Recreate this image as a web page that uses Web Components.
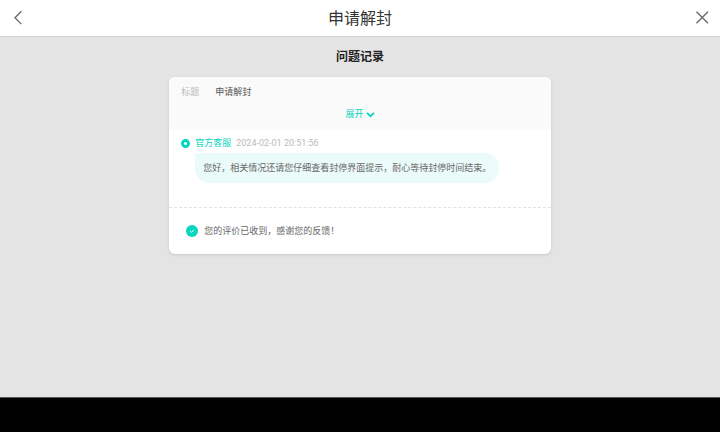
<!DOCTYPE html>
<html lang="zh-CN">
<head>
<meta charset="utf-8">
<meta name="viewport" content="width=device-width, initial-scale=1">
<title>申请解封</title>
<style>
    body {
        margin: 0;
        background: #e4e4e4;
        color: #666;
        font: 9px/16px "Noto Sans CJK SC", sans-serif;
        --accent: #06d6be;
    }
</style>
</head>
<body>

<template id="app-shell-template">
    <style>
        :host {
            display: flex;
            flex-direction: column;
            min-height: 100vh;
        }

        main {
            flex: 1;
            display: flex;
            flex-direction: column;
            align-items: center;
            padding: 8px 16px;
        }

        footer {
            height: 34px;
            background: #000;
            border-top: 1px solid #555;
        }
    </style>

    <slot name="bar"></slot>
    <main><slot></slot></main>
    <footer></footer>
</template>

<template id="title-bar-template">
    <style>
        :host {
            display: block;
        }

        header {
            display: flex;
            align-items: center;
            justify-content: space-between;
            height: 36px;
            padding: 0 8px;
            background: #fff;
            border-bottom: 1px solid #d2d2d2;
        }

        h1 {
            margin: 0;
            padding-bottom: 2px;
            color: #333;
            font-size: 16px;
            line-height: 24px;
            font-weight: 400;
        }

        button {
            display: flex;
            align-items: center;
            justify-content: center;
            width: 20px;
            height: 20px;
            padding: 0;
            border: 0;
            background: none;
            color: #666;
        }

        svg {
            fill: none;
            stroke: currentColor;
            stroke-width: 1.3;
        }
    </style>

    <header>
        <button type="button" aria-label="返回">
            <svg width="20" height="20" viewBox="0 0 20 20"><path d="M13.3 3.3 7 9.7l6.3 6.4"/></svg>
        </button>
        <h1><slot></slot></h1>
        <button type="button" aria-label="关闭">
            <svg width="20" height="20" viewBox="0 0 20 20"><path d="M4.5 3.8 16 15.3M16 3.8 4.5 15.3"/></svg>
        </button>
    </header>
</template>

<template id="record-card-template">
    <style>
        :host {
            display: block;
            width: 53vw;
            min-width: 340px;
            margin-top: 12px;
            border-radius: 6px;
            background: #fff;
            box-shadow: 0 1px 3px rgba(0, 0, 0, .12);
            overflow: hidden;
        }

        .replies {
            padding: 5px 12px 24px;
            border-bottom: 1px dashed #e2e2e2;
        }

        .result {
            padding: 15px 16px;
        }
    </style>

    <slot name="summary"></slot>
    <div class="replies"><slot></slot></div>
    <div class="result"><slot name="result"></slot></div>
</template>

<template id="record-summary-template">
    <style>
        :host {
            display: block;
            padding: 7px 12px 8px;
            background: #fafafa;
        }

        dl {
            display: flex;
            gap: 16px;
            margin: 0;
        }

        dt {
            color: #bbb;
        }

        dd {
            margin: 0;
            color: #555;
        }

        button {
            display: flex;
            align-items: center;
            gap: 2px;
            margin: 6px auto 0;
            padding: 0;
            border: 0;
            background: none;
            color: var(--accent);
            font: inherit;
        }

        svg {
            fill: none;
            stroke: currentColor;
            stroke-width: 1.8;
        }
    </style>

    <dl>
        <dt>标题</dt>
        <dd><slot></slot></dd>
    </dl>
    <button type="button" aria-expanded="false">
        展开
        <svg width="9" height="9" viewBox="0 0 9 9"><path d="m1 2.8 3.5 3.4L8 2.8"/></svg>
    </button>
</template>

<template id="service-reply-template">
    <style>
        :host {
            display: block;
        }

        .meta {
            display: flex;
            align-items: center;
            gap: 5px;
            color: var(--accent);
        }

        time {
            color: #bbb;
            font-family: Roboto, sans-serif;
        }

        .dot {
            box-sizing: border-box;
            width: 9px;
            height: 9px;
            border: 3px solid var(--accent);
            border-radius: 50%;
        }

        p {
            width: fit-content;
            box-sizing: border-box;
            margin: 2px 0 0 14px;
            padding: 7px 8px;
            border-radius: 2px 14px 14px 14px;
            background: #ebfbfa;
        }
    </style>

    <div class="meta">
        <span class="dot"></span>
        <slot name="author"></slot>
        <time></time>
    </div>
    <p><slot></slot></p>
</template>

<template id="result-note-template">
    <style>
        :host {
            display: flex;
            align-items: center;
            gap: 6px;
            padding: 0 1px;
        }

        circle {
            fill: var(--accent);
        }

        path {
            fill: none;
            stroke: #fff;
            stroke-width: 1;
        }
    </style>

    <svg width="12" height="12" viewBox="0 0 12 12"><circle cx="6" cy="6" r="6"/><path d="m4.2 6 1.3 1.3 2.4-2.4"/></svg>
    <span><slot></slot></span>
</template>

<template id="section-title-template">
    <style>
        :host {
            display: block;
        }

        h2 {
            margin: 3px 0 1px;
            color: #222;
            font-size: 12px;
            line-height: 16px;
            font-weight: 700;
        }
    </style>

    <h2><slot></slot></h2>
</template>

<app-shell>
    <title-bar slot="bar">申请解封</title-bar>
    <section-title>问题记录</section-title>
    <record-card>
        <record-summary slot="summary">申请解封</record-summary>
        <service-reply time="2024-02-01 20:51:56">
            <span slot="author">官方客服</span>您好，相关情况还请您仔细查看封停界面提示，耐心等待封停时间结束。</service-reply>
        <result-note slot="result">您的评价已收到，感谢您的反馈！</result-note>
    </record-card>
</app-shell>

<script>
    (() => {

        class TemplateElement extends HTMLElement {
            constructor() {
                super();

                const template = document.getElementById(this.localName + "-template");
                this.attachShadow({ mode: "open" });
                this.shadowRoot.appendChild(template.content.cloneNode(true));
            }
        }

        class ServiceReply extends TemplateElement {
            static get observedAttributes() {
                return ["time"];
            }

            attributeChangedCallback(name, oldVal, newVal) {
                const $time = this.shadowRoot.querySelector("time");
                $time.textContent = newVal;
                $time.dateTime = newVal;
            }
        }

        customElements.define("app-shell", class extends TemplateElement {});
        customElements.define("title-bar", class extends TemplateElement {});
        customElements.define("section-title", class extends TemplateElement {});
        customElements.define("record-card", class extends TemplateElement {});
        customElements.define("record-summary", class extends TemplateElement {});
        customElements.define("service-reply", ServiceReply);
        customElements.define("result-note", class extends TemplateElement {});
    })();
</script>
</body>
</html>
